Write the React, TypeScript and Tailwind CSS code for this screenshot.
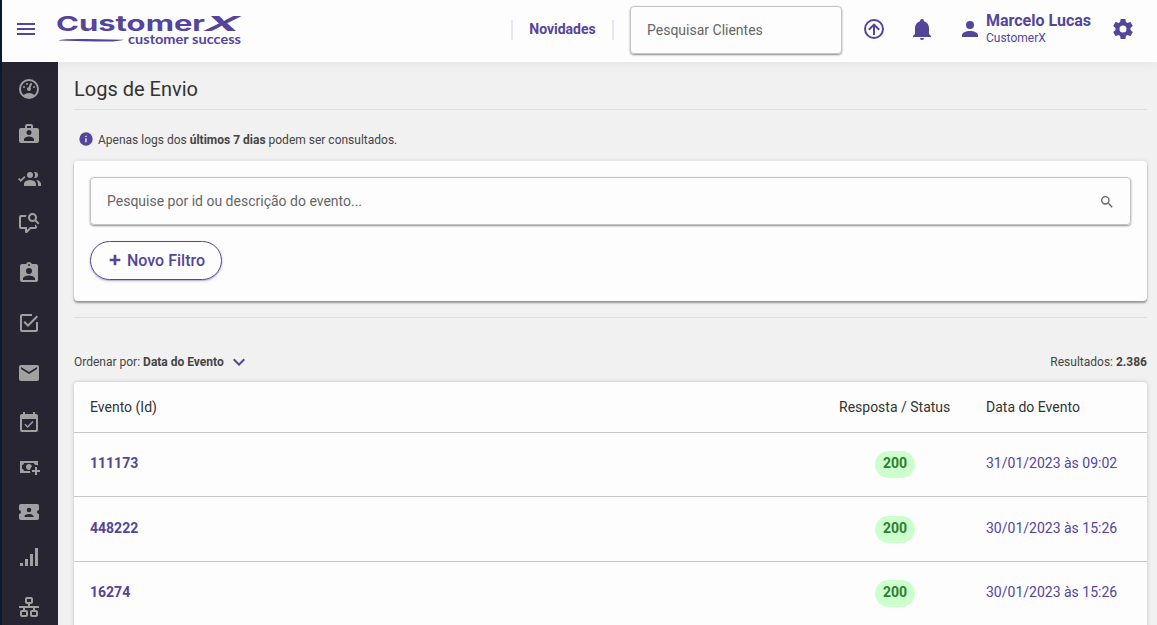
import clsx from "clsx";

const icons = {
  menu: "M3,6H21V8H3V6M3,11H21V13H3V11M3,16H21V18H3V16Z",
  gauge:
    "M12,2A10,10 0 0,0 2,12A10,10 0 0,0 12,22A10,10 0 0,0 22,12A10,10 0 0,0 12,2M12,4A8,8 0 0,1 20,12C20,14.4 19,16.5 17.3,18C15.9,16.7 14,16 12,16C10,16 8.2,16.7 6.7,18C5,16.5 4,14.4 4,12A8,8 0 0,1 12,4M14,5.89C13.62,5.9 13.26,6.15 13.1,6.54L11.81,9.77L11.71,10C11,10.13 10.41,10.6 10.14,11.26C9.73,12.29 10.23,13.45 11.26,13.86C12.29,14.27 13.45,13.77 13.86,12.74C14.12,12.08 14,11.32 13.57,10.76L13.67,10.5L14.96,7.29L14.97,7.26C15.17,6.75 14.92,6.17 14.41,5.96C14.28,5.91 14.15,5.89 14,5.89M10,6A1,1 0 0,0 9,7A1,1 0 0,0 10,8A1,1 0 0,0 11,7A1,1 0 0,0 10,6M7,9A1,1 0 0,0 6,10A1,1 0 0,0 7,11A1,1 0 0,0 8,10A1,1 0 0,0 7,9M17,9A1,1 0 0,0 16,10A1,1 0 0,0 17,11A1,1 0 0,0 18,10A1,1 0 0,0 17,9Z",
  briefcase:
    "M10,2A2,2 0 0,0 8,4V6H4A2,2 0 0,0 2,8V19A2,2 0 0,0 4,21H20A2,2 0 0,0 22,19V8A2,2 0 0,0 20,6H16V4A2,2 0 0,0 14,2M10,4V6H14V4M12,8A2.5,2.5 0 0,0 9.5,10.5A2.5,2.5 0 0,0 12,13A2.5,2.5 0 0,0 14.5,10.5A2.5,2.5 0 0,0 12,8M7,19H17V17.5C17,15.6 14,14.5 12,14.5C10,14.5 7,15.6 7,17.5Z",
  people:
    "M19 17V19H7V17S7 13 13 13 19 17 19 17M16 8A3 3 0 1 0 13 11A3 3 0 0 0 16 8M19.2 13.06A5.6 5.6 0 0 1 21 17V19H24V17S24 13.55 19.2 13.06M18 5A2.91 2.91 0 0 0 17.11 5.14A5 5 0 0 1 17.11 10.86A2.91 2.91 0 0 0 18 11A3 3 0 0 0 18 5M7.34 8.92L8.5 10.33L3.75 15.08L1 12.08L2.16 10.92L3.75 12.5L7.34 8.92",
  messageSearch:
    "M15.5,2A4.5,4.5 0 0,0 11,6.5A4.5,4.5 0 0,0 15.5,11C16.37,11 17.19,10.75 17.88,10.31L21,13.42L22.42,12L19.31,8.9C19.75,8.2 20,7.38 20,6.5A4.5,4.5 0 0,0 15.5,2M15.5,4A2.5,2.5 0 0,1 18,6.5A2.5,2.5 0 0,1 15.5,9A2.5,2.5 0 0,1 13,6.5A2.5,2.5 0 0,1 15.5,4M4,4A2,2 0 0,0 2,6V16A2,2 0 0,0 4,18H8V21A1,1 0 0,0 9,22H9.5C9.75,22 10,21.9 10.2,21.71L13.9,18H18A2,2 0 0,0 20,16V15.24L18,13.24V16H13.08L10,19.08V16H4V6H9C9.05,5.3 9.2,4.63 9.46,4Z",
  clipboard:
    "M18,19H6V17.6C6,15.6 10,14.5 12,14.5C14,14.5 18,15.6 18,17.6M12,7A3,3 0 0,1 15,10A3,3 0 0,1 12,13A3,3 0 0,1 9,10A3,3 0 0,1 12,7M12,3A1,1 0 0,1 13,4A1,1 0 0,1 12,5A1,1 0 0,1 11,4A1,1 0 0,1 12,3M19,3H14.82C14.4,1.84 13.3,1 12,1C10.7,1 9.6,1.84 9.18,3H5A2,2 0 0,0 3,5V19A2,2 0 0,0 5,21H19A2,2 0 0,0 21,19V5A2,2 0 0,0 19,3Z",
  checkbox:
    "M19,19H5V5H15V3H5C3.89,3 3,3.89 3,5V19A2,2 0 0,0 5,21H19A2,2 0 0,0 21,19V11H19M7.91,10.08L6.5,11.5L11,16L21,6L19.59,4.58L11,13.17L7.91,10.08Z",
  email:
    "M20,8L12,13L4,8V6L12,11L20,6M20,4H4C2.89,4 2,4.89 2,6V18A2,2 0 0,0 4,20H20A2,2 0 0,0 22,18V6C22,4.89 21.1,4 20,4Z",
  calendar:
    "M19,19H5V8H19M19,3H18V1H16V3H8V1H6V3H5C3.89,3 3,3.9 3,5V19A2,2 0 0,0 5,21H19A2,2 0 0,0 21,19V5A2,2 0 0,0 19,3M16.53,11.06L15.47,10L10.59,14.88L8.47,12.76L7.41,13.82L10.59,17L16.53,11.06Z",
  cash: "M15 15V17H18V20H20V17H23V15H20V12H18V15M14.97 11.61C14.85 10.28 13.59 8.97 12 9C10.3 9.03 9 10.3 9 12C9 13.7 10.3 14.94 12 15C12.38 15 12.77 14.92 13.14 14.77C13.41 13.67 13.86 12.63 14.97 11.61M13 16H7C7 14.9 6.1 14 5 14V10C6.1 10 7 9.1 7 8H17C17 9.1 17.9 10 19 10V10.06C19.67 10.06 20.34 10.18 21 10.4V6H3V18H13.32C13.1 17.33 13 16.66 13 16Z",
  ticket:
    "M20,12A2,2 0 0,0 22,14V18A2,2 0 0,1 20,20H4A2,2 0 0,1 2,18V14A2,2 0 0,0 4,12A2,2 0 0,0 2,10V6A2,2 0 0,1 4,4H20A2,2 0 0,1 22,6V10A2,2 0 0,0 20,12M16.5,16.25C16.5,14.75 13.5,14 12,14C10.5,14 7.5,14.75 7.5,16.25V17H16.5V16.25M12,12.25A2.25,2.25 0 0,0 14.25,10A2.25,2.25 0 0,0 12,7.75A2.25,2.25 0 0,0 9.75,10A2.25,2.25 0 0,0 12,12.25Z",
  signal: "M3,21H6V18H3M8,21H11V14H8M13,21H16V9H13M18,21H21V3H18V21Z",
  lan: "M10,2C8.89,2 8,2.89 8,4V7C8,8.11 8.89,9 10,9H11V11H2V13H6V15H5C3.89,15 3,15.89 3,17V20C3,21.11 3.89,22 5,22H9C10.11,22 11,21.11 11,20V17C11,15.89 10.11,15 9,15H8V13H16V15H15C13.89,15 13,15.89 13,17V20C13,21.11 13.89,22 15,22H19C20.11,22 21,21.11 21,20V17C21,15.89 20.11,15 19,15H18V13H22V11H13V9H14C15.11,9 16,8.11 16,7V4C16,2.89 15.11,2 14,2H10M10,4H14V7H10V4M5,17H9V20H5V17M15,17H19V20H15V17Z",
  arrowUp:
    "M13,18V10L16.5,13.5L17.92,12.08L12,6.16L6.08,12.08L7.5,13.5L11,10V18H13M12,2A10,10 0 0,1 22,12A10,10 0 0,1 12,22A10,10 0 0,1 2,12A10,10 0 0,1 12,2M12,4A8,8 0 0,0 4,12A8,8 0 0,0 12,20A8,8 0 0,0 20,12A8,8 0 0,0 12,4Z",
  bell: "M21,19V20H3V19L5,17V11C5,7.9 7.03,5.17 10,4.29C10,4.19 10,4.1 10,4A2,2 0 0,1 12,2A2,2 0 0,1 14,4C14,4.1 14,4.19 14,4.29C16.97,5.17 19,7.9 19,11V17L21,19M14,21A2,2 0 0,1 12,23A2,2 0 0,1 10,21",
  account:
    "M12,4A4,4 0 0,1 16,8A4,4 0 0,1 12,12A4,4 0 0,1 8,8A4,4 0 0,1 12,4M12,14C16.42,14 20,15.79 20,18V20H4V18C4,15.79 7.58,14 12,14Z",
  cog: "M12,15.5A3.5,3.5 0 0,1 8.5,12A3.5,3.5 0 0,1 12,8.5A3.5,3.5 0 0,1 15.5,12A3.5,3.5 0 0,1 12,15.5M19.43,12.97C19.47,12.65 19.5,12.33 19.5,12C19.5,11.67 19.47,11.34 19.43,11L21.54,9.37C21.73,9.22 21.78,8.95 21.66,8.73L19.66,5.27C19.54,5.05 19.27,4.96 19.05,5.05L16.56,6.05C16.04,5.66 15.5,5.32 14.87,5.07L14.5,2.42C14.46,2.18 14.25,2 14,2H10C9.75,2 9.54,2.18 9.5,2.42L9.13,5.07C8.5,5.32 7.96,5.66 7.44,6.05L4.95,5.05C4.73,4.96 4.46,5.05 4.34,5.27L2.34,8.73C2.21,8.95 2.27,9.22 2.46,9.37L4.57,11C4.53,11.34 4.5,11.67 4.5,12C4.5,12.33 4.53,12.65 4.57,12.97L2.46,14.63C2.27,14.78 2.21,15.05 2.34,15.27L4.34,18.73C4.46,18.95 4.73,19.03 4.95,18.95L7.44,17.94C7.96,18.34 8.5,18.68 9.13,18.93L9.5,21.58C9.54,21.82 9.75,22 10,22H14C14.25,22 14.46,21.82 14.5,21.58L14.87,18.93C15.5,18.67 16.04,18.34 16.56,17.94L19.05,18.95C19.27,19.03 19.54,18.95 19.66,18.73L21.66,15.27C21.78,15.05 21.73,14.78 21.54,14.63L19.43,12.97Z",
  magnify:
    "M9.5,3A6.5,6.5 0 0,1 16,9.5C16,11.11 15.41,12.59 14.44,13.73L14.71,14H15.5L20.5,19L19,20.5L14,15.5V14.71L13.73,14.44C12.59,15.41 11.11,16 9.5,16A6.5,6.5 0 0,1 3,9.5A6.5,6.5 0 0,1 9.5,3M9.5,5C7,5 5,7 5,9.5C5,12 7,14 9.5,14C12,14 14,12 14,9.5C14,7 12,5 9.5,5Z",
  info: "M13,9H11V7H13M13,17H11V11H13M12,2A10,10 0 0,0 2,12A10,10 0 0,0 12,22A10,10 0 0,0 22,12A10,10 0 0,0 12,2Z",
  plus: "M20 14H14V20H10V14H4V10H10V4H14V10H20V14Z",
  chevronDown: "M7.41,8.58L12,13.17L16.59,8.58L18,10L12,16L6,10L7.41,8.58Z",
};

type IconName = keyof typeof icons;

function Icon({ name, className = "size-6" }: { name: IconName; className?: string }) {
  return (
    <svg viewBox="0 0 24 24" fill="currentColor" fillRule="evenodd" className={clsx("shrink-0", className)}>
      <path d={icons[name]} />
    </svg>
  );
}

const menuItems: { icon: IconName; spacing: string }[] = [
  { icon: "gauge", spacing: "mt-[15px]" },
  { icon: "briefcase", spacing: "mt-[21px]" },
  { icon: "people", spacing: "mt-[21px]" },
  { icon: "messageSearch", spacing: "mt-5" },
  { icon: "clipboard", spacing: "mt-[26px]" },
  { icon: "checkbox", spacing: "mt-[26px]" },
  { icon: "email", spacing: "mt-[26px]" },
  { icon: "calendar", spacing: "mt-[26px]" },
  { icon: "cash", spacing: "mt-5" },
  { icon: "ticket", spacing: "mt-[21px]" },
  { icon: "signal", spacing: "mt-[21px]" },
  { icon: "lan", spacing: "mt-[26px]" },
];

const logs = [
  { id: "111173", status: 200, date: "31/01/2023 às 09:02" },
  { id: "448222", status: 200, date: "30/01/2023 às 15:26" },
  { id: "16274", status: 200, date: "30/01/2023 às 15:26" },
];

function Logo() {
  return (
    <svg width="192" height="36" viewBox="0 0 192 36" className="ml-4 shrink-0 fill-[#54459b]">
      <text x="2" y="18.8" className="font-[Inter] text-[20.5px] font-bold" textLength="149" lengthAdjust="spacingAndGlyphs">
        Customer
      </text>
      <text
        transform="translate(148 18.8) skewX(-24)"
        className="font-[Inter] text-[20.5px] font-bold"
        textLength="35"
        lengthAdjust="spacingAndGlyphs"
      >
        X
      </text>
      <path d="M4 28.4Q10 26.9 32 27.1L70 27.7Q64 29.5 54 29.5T4 28.4Z" />
      <text x="74" y="31.5" className="font-[Lato] text-[13px] font-bold" textLength="113" lengthAdjust="spacingAndGlyphs">
        customer success
      </text>
    </svg>
  );
}

function Header() {
  return (
    <header className="relative z-10 flex h-[62px] items-start bg-[#fdfdfd] pl-3 text-[#54459b] shadow-[0_2px_10px_rgba(0,0,0,0.06)]">
      <button className="mt-[17px]">
        <Icon name="menu" />
      </button>
      <div className="mt-3">
        <Logo />
      </div>
      <div className="mt-5 ml-auto flex h-5 w-[103px] shrink-0 items-center justify-center border-x-2 border-[#e8e4fd] text-sm font-bold">
        <span className="-mt-0.5">Novidades</span>
      </div>
      <div className="mt-1.5 ml-4 flex h-12 w-[212px] shrink-0 items-center rounded border border-[#c4c4c4] px-4 text-sm text-[#666] shadow-[0_1px_2px_rgba(0,0,0,0.45)]">
        Pesquisar Clientes
      </div>
      <div className="mt-[17px] ml-5 flex shrink-0 gap-6">
        <Icon name="arrowUp" />
        <Icon name="bell" />
        <div className="flex">
          <Icon name="account" />
          <div className="-mt-[5px] ml-1 w-[125px]">
            <p className="text-base leading-[18px] font-bold">Marcelo Lucas</p>
            <p className="text-xs leading-4">CustomerX</p>
          </div>
          <Icon name="cog" />
        </div>
      </div>
      <div className="w-[22px] shrink-0" />
    </header>
  );
}

function Sidebar() {
  return (
    <nav className="flex w-14 shrink-0 flex-col items-center bg-[#282532] pr-0.5 text-[#a1a1a1]">
      {menuItems.map((item) => (
        <Icon key={item.icon} name={item.icon} className={clsx("size-6", item.spacing)} />
      ))}
    </nav>
  );
}

function Filters() {
  return (
    <section className="mt-3 h-[140px] rounded bg-[#fdfdfd] px-4 pt-4 shadow-[0_2px_2px_rgba(0,0,0,0.35),0_0_4px_rgba(0,0,0,0.12)]">
      <div className="flex h-12 items-center justify-between rounded border border-[#c4c4c4] pr-[15px] pl-4 text-sm text-[#666] shadow-[0_1px_2px_rgba(0,0,0,0.45)]">
        Pesquise por id ou descrição do evento...
        <Icon name="magnify" className="mt-0.5 size-4" />
      </div>
      <button className="mt-4 flex h-[39px] w-[132px] items-center justify-center gap-1 rounded-full border border-[#54459b] text-base font-medium text-[#54459b] shadow-[0_1px_2px_rgba(84,69,155,0.5)]">
        <Icon name="plus" className="-mt-px size-4" />
        Novo Filtro
      </button>
    </section>
  );
}

function LogsTable() {
  return (
    <section className="mt-3 h-[260px] rounded bg-[#fdfdfd] text-sm shadow-[0_0_4px_rgba(0,0,0,0.2)]">
      <div className="grid h-[50.75px] grid-cols-[1fr_147px_161px] items-center border-b border-[#c6c6c6] text-[#333]">
        <span className="pl-4">Evento (Id)</span>
        <span>Resposta / Status</span>
        <span>Data do Evento</span>
      </div>
      {logs.map((log) => (
        <div
          key={log.id}
          className="grid h-[64.5px] grid-cols-[1fr_147px_161px] items-start border-b border-[#c6c6c6] pt-[20.4px] text-[#54459b]"
        >
          <span className="pl-4 font-bold">{log.id}</span>
          <span className="-mt-0.5 ml-9 flex h-[27px] w-10 justify-center rounded-full bg-[#ccffcc] pt-0.5 font-bold text-[#2e7d32]">
            {log.status}
          </span>
          <span>{log.date}</span>
        </div>
      ))}
    </section>
  );
}

export default function App() {
  return (
    <div className="h-[625px] overflow-hidden border-l-2 border-[#071a30] bg-[#f1f1f1] font-[Roboto,sans-serif]">
      <Header />
      <div className="flex h-[563px]">
        <Sidebar />
        <main className="min-w-0 flex-1 pr-2.5 pl-4 text-xs text-[#444]">
          <h1 className="flex h-12 items-center border-b border-[#dedede] pt-1.5 text-xl text-[#333]">Logs de Envio</h1>
          <div className="mt-[21px] flex h-[18px] items-center pl-1">
            <Icon name="info" className="mr-1 -mt-0.5 size-4 text-[#54459b]" />
            <p>
              Apenas logs dos <b>últimos 7 dias</b> podem ser consultados.
            </p>
          </div>
          <Filters />
          <div className="mt-4 border-t border-[#dedede]" />
          <div className="mt-[35px] flex h-[17px] items-center justify-between">
            <div className="flex items-center">
              <span>
                Ordenar por: <b>Data do Evento</b>
              </span>
              <Icon name="chevronDown" className="ml-[3px] size-6 text-[#54459b]" />
            </div>
            <span>
              Resultados: <b>2.386</b>
            </span>
          </div>
          <LogsTable />
        </main>
      </div>
    </div>
  );
}
